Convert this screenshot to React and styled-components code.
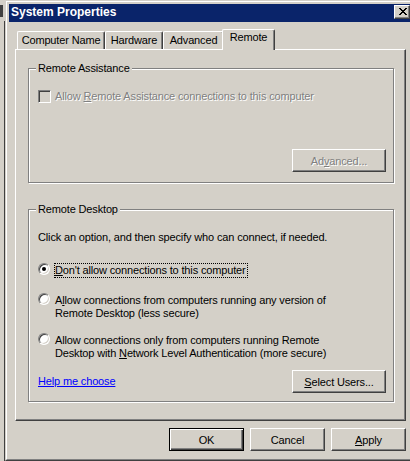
import React from 'react';
import styled, { createGlobalStyle, css } from 'styled-components';

const GlobalStyle = createGlobalStyle`
  html, body {
    margin: 0;
    padding: 0;
    background: #d4d0c8;
  }
  body {
    font-family: 'Liberation Sans', Arial, sans-serif;
    font-size: 11px;
    letter-spacing: -0.15px;
    color: #000;
  }
`;

const tabs = [
  { label: 'Computer Name', width: 88 },
  { label: 'Hardware', width: 58 },
  { label: 'Advanced', width: 61 },
  { label: 'Remote', width: 49 },
];

export default function App() {
  const active = 'Remote';
  return (
    <>
      <GlobalStyle />
      <Screen>
        <BackWindow>
          <BackCaption>
            <Nub />
          </BackCaption>
          <BackEdge />
        </BackWindow>
        <Dialog>
          <Frame>
            <TitleBar>
              <Title>System Properties</Title>
              <CloseButton aria-label="Close">
                <svg width="8" height="7" viewBox="0 0 8 7" shapeRendering="crispEdges">
                  <path
                    fill="#000"
                    d="M0 0h2v1H0zM6 0h2v1H6zM1 1h2v1H1zM5 1h2v1H5zM2 2h4v1H2zM3 3h2v1H3zM2 4h4v1H2zM1 5h2v1H1zM5 5h2v1H5zM0 6h2v1H0zM6 6h2v1H6z"
                  />
                </svg>
              </CloseButton>
            </TitleBar>

            <Body>
              <TabRow>
                {tabs.map((t) => (
                  <Tab key={t.label} $width={t.width} $active={t.label === active}>
                    {t.label}
                  </Tab>
                ))}
              </TabRow>

              <Panel>
                <Group $pad="15px 7px 10px 9px">
                  <Legend>Remote Assistance</Legend>
                  <CheckRow>
                    <CheckBox $disabled />
                    <Disabled>
                      Allow <Key>R</Key>emote Assistance connections to this computer
                    </Disabled>
                  </CheckRow>
                  <ButtonRow $top={46}>
                    <Button $width={94} disabled>
                      Ad<Key>v</Key>anced...
                    </Button>
                  </ButtonRow>
                </Group>

                <Group $pad="15px 7px 8px 9px">
                  <Legend>Remote Desktop</Legend>
                  <Intro>Click an option, and then specify who can connect, if needed.</Intro>
                  <RadioRow $top={19}>
                    <Radio $checked />
                    <RadioText $focused>
                      <Key>D</Key>on't allow connections to this computer
                    </RadioText>
                  </RadioRow>
                  <RadioRow $top={15}>
                    <Radio />
                    <RadioText>
                      A<Key>l</Key>low connections from computers running any version of
                      <br />
                      Remote Desktop (less secure)
                    </RadioText>
                  </RadioRow>
                  <RadioRow $top={12}>
                    <Radio />
                    <RadioText>
                      Allow connections only from computers running Remote
                      <br />
                      Desktop with <Key>N</Key>etwork Level Authentication (more secure)
                    </RadioText>
                  </RadioRow>
                  <LinkRow>
                    <HelpLink>Help me choose</HelpLink>
                    <Button $width={94}>
                      <Key>S</Key>elect Users...
                    </Button>
                  </LinkRow>
                </Group>
              </Panel>

              <Footer>
                <Button $width={75} $default>
                  OK
                </Button>
                <Button $width={75}>Cancel</Button>
                <Button $width={75}>
                  <Key>A</Key>pply
                </Button>
              </Footer>
            </Body>
          </Frame>
        </Dialog>
      </Screen>
    </>
  );
}

const Screen = styled.div`
  display: flex;
  width: 410px;
  height: 461px;
  overflow: hidden;
`;

const BackWindow = styled.div`
  display: flex;
  flex-direction: column;
  width: 5px;
  flex: none;
`;

const BackCaption = styled.div`
  height: 21px;
  padding-top: 5px;
  box-sizing: border-box;
`;

const Nub = styled.div`
  width: 3px;
  height: 12px;
  background: #404040;
`;

const BackEdge = styled.div`
  flex: 1;
  border-right: 1px solid #404040;
`;

const Dialog = styled.div`
  flex: 1;
  display: flex;
  border-top: 1px solid #d4d0c8;
  border-left: 1px solid #d4d0c8;
  border-bottom: 1px solid #404040;
`;

const Frame = styled.div`
  flex: 1;
  display: flex;
  flex-direction: column;
  border-top: 1px solid #fff;
  border-left: 1px solid #fff;
  border-bottom: 1px solid #808080;
  padding: 2px 0 0 2px;
`;

const TitleBar = styled.div`
  display: flex;
  align-items: flex-start;
  justify-content: space-between;
  height: 18px;
  padding: 1px 0 0 2px;
  box-sizing: border-box;
  background: #0a246a;
`;

const Title = styled.div`
  color: #fff;
  font-weight: bold;
  font-size: 12px;
  letter-spacing: 0;
  line-height: 15px;
  white-space: nowrap;
`;

const CloseButton = styled.div`
  box-sizing: border-box;
  width: 16px;
  height: 14px;
  display: flex;
  align-items: center;
  justify-content: center;
  background: #d4d0c8;
  border: 1px solid;
  border-color: #fff #404040 #404040 #fff;
  box-shadow: inset -1px -1px 0 #808080;
  padding: 0 0 1px 1px;
`;

const Body = styled.div`
  flex: 1;
  display: flex;
  flex-direction: column;
  padding: 7px 4px 0 6px;
`;

const TabRow = styled.div`
  display: flex;
  align-items: flex-end;
  height: 20px;
  padding-left: 2px;
`;

const Tab = styled.div`
  box-sizing: border-box;
  width: ${(p) => p.$width}px;
  height: 18px;
  padding-top: 2px;
  line-height: 13px;
  text-align: center;
  white-space: nowrap;
  border-top: 1px solid #fff;
  border-left: 1px solid #fff;
  border-right: 1px solid #404040;
  border-radius: 2px 2px 0 0;
  box-shadow: inset -1px 0 0 #808080;

  ${(p) =>
    p.$active &&
    css`
      width: ${p.$width + 4}px;
      height: 21px;
      padding-top: 1px;
      margin: 0 -2px -1px;
      position: relative;
      z-index: 1;
      background: #d4d0c8;
    `}
`;

const Panel = styled.div`
  display: flex;
  flex-direction: column;
  gap: 20px;
  box-sizing: border-box;
  height: 372px;
  padding: 12px 11px 0 12px;
  border-top: 1px solid #fff;
  border-left: 1px solid #fff;
  border-right: 1px solid #404040;
  border-bottom: 1px solid #404040;
  box-shadow: inset -1px -1px 0 #808080;
`;

const Group = styled.fieldset`
  margin: 0;
  min-width: 0;
  display: flex;
  flex-direction: column;
  padding: ${(p) => p.$pad};
  border: 1px solid #808080;
  box-shadow: 1px 1px 0 #fff, inset 1px 1px 0 #fff;
`;

const Legend = styled.legend`
  padding: 0 2px;
  margin-left: -2px;
  line-height: 13px;
  background: #d4d0c8;
`;

const CheckRow = styled.div`
  display: flex;
  align-items: center;
  gap: 4px;
  line-height: 13px;
`;

const CheckBox = styled.span`
  box-sizing: border-box;
  flex: none;
  width: 13px;
  height: 13px;
  border: 1px solid;
  border-color: #808080 #fff #fff #808080;
  box-shadow: inset 1px 1px 0 #404040, inset -1px -1px 0 #d4d0c8;
  background: ${(p) => (p.$disabled ? '#d4d0c8' : '#fff')};
`;

const Disabled = styled.span`
  color: #808080;
  text-shadow: 1px 1px 0 #fff;
  white-space: nowrap;
`;

const Key = styled.span`
  text-decoration: underline;
`;

const ButtonRow = styled.div`
  display: flex;
  justify-content: flex-end;
  margin-top: ${(p) => p.$top}px;
`;

const Button = styled.button`
  box-sizing: border-box;
  width: ${(p) => p.$width}px;
  height: 23px;
  padding: 0;
  font: inherit;
  letter-spacing: inherit;
  color: #000;
  background: #d4d0c8;
  border: 1px solid;
  border-color: #fff #404040 #404040 #fff;
  border-radius: 0;
  box-shadow: inset -1px -1px 0 #808080;

  ${(p) =>
    p.$default &&
    css`
      border-color: #000;
      box-shadow: inset 1px 1px 0 #fff, inset -1px -1px 0 #404040, inset -2px -2px 0 #808080;
    `}

  &:disabled {
    color: #808080;
    text-shadow: 1px 1px 0 #fff;
  }
`;

const Intro = styled.div`
  line-height: 13px;
  white-space: nowrap;
`;

const RadioRow = styled.div`
  display: flex;
  align-items: flex-start;
  gap: 4px;
  margin-top: ${(p) => p.$top}px;
`;

const Radio = styled.span`
  position: relative;
  flex: none;
  box-sizing: border-box;
  width: 12px;
  height: 12px;
  border-radius: 50%;
  border: 1px solid;
  border-color: #808080 #fff #fff #808080;
  background: #fff;
  box-shadow: inset 1px 1px 0 #404040, inset -1px -1px 0 #d4d0c8;

  ${(p) =>
    p.$checked &&
    css`
      &::after {
        content: '';
        position: absolute;
        left: 3px;
        top: 3px;
        width: 4px;
        height: 4px;
        border-radius: 50%;
        background: #000;
      }
    `}
`;

const RadioText = styled.span`
  line-height: 13px;
  white-space: nowrap;
  border: 1px ${(p) => (p.$focused ? 'dotted #000' : 'solid transparent')};
  padding-right: 1px;
`;

const LinkRow = styled.div`
  display: flex;
  align-items: center;
  justify-content: space-between;
  margin-top: 9px;
`;

const HelpLink = styled.a`
  color: #0000ff;
  text-decoration: underline;
  line-height: 13px;
  cursor: pointer;
`;

const Footer = styled.div`
  display: flex;
  justify-content: flex-end;
  gap: 6px;
  margin-top: 7px;
`;
